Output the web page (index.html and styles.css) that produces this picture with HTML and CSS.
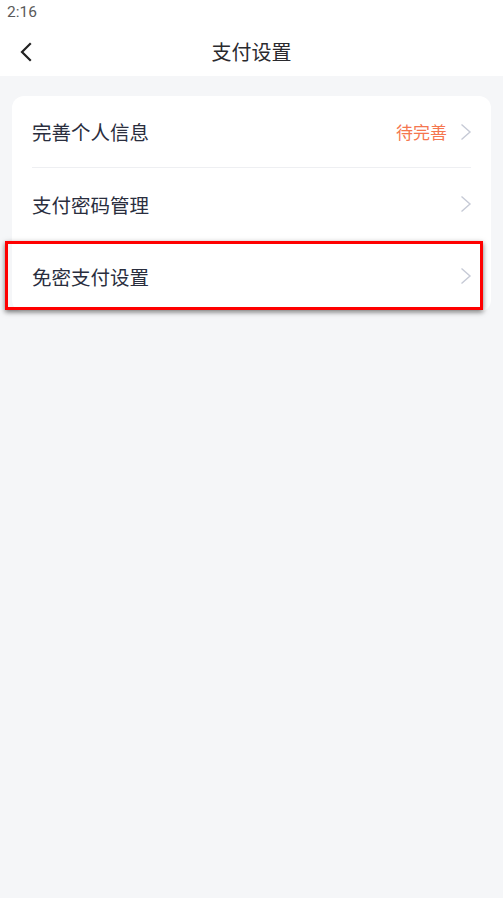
FILE: index.html
```
<!DOCTYPE html>
<html lang="zh">
<head>
<meta charset="utf-8">
<title>支付设置</title>
<link rel="stylesheet" href="styles.css">
</head>
<body>
<div class="page">
  <div class="status">2:16</div>
  <div class="nav">
    <svg class="back" width="14" height="20" viewBox="0 0 14 20"><path d="M11 2 L3 10 L11 18" fill="none" stroke="#222" stroke-width="2.2" stroke-linecap="square"/></svg>
    <div class="title">支付设置</div>
  </div>
  <div class="content">
    <div class="card">
      <div class="row">
        <span class="label">完善个人信息</span>
        <span class="right"><span class="status-tag">待完善</span><svg class="chev" width="12" height="18" viewBox="0 0 12 18"><path d="M1.5 1.5 L10 9 L1.5 16.5" fill="none" stroke="#c6cad6" stroke-width="1.4"/></svg></span>
      </div>
      <div class="row">
        <span class="label">支付密码管理</span>
        <span class="right"><svg class="chev" width="12" height="18" viewBox="0 0 12 18"><path d="M1.5 1.5 L10 9 L1.5 16.5" fill="none" stroke="#c6cad6" stroke-width="1.4"/></svg></span>
      </div>
      <div class="row">
        <span class="label">免密支付设置</span>
        <span class="right"><svg class="chev" width="12" height="18" viewBox="0 0 12 18"><path d="M1.5 1.5 L10 9 L1.5 16.5" fill="none" stroke="#c6cad6" stroke-width="1.4"/></svg></span>
      </div>
      <div class="highlight"></div>
    </div>
  </div>
</div>
</body>
</html>
```
FILE: styles.css
```
* { box-sizing: border-box; }
html, body { margin: 0; padding: 0; }
body {
  width: 503px;
  height: 898px;
  background: #f5f6f8;
  font-family: Roboto, "Noto Sans CJK SC", sans-serif;
  overflow: hidden;
}
.page { position: relative; }
.status {
  height: 28px;
  background: #fff;
  color: #5a5a5a;
  font-size: 15.5px;
  line-height: 24px;
  padding-left: 7px;
  font-family: Roboto, sans-serif;
}
.nav {
  position: relative;
  height: 48px;
  background: #fff;
  display: flex;
  align-items: center;
  justify-content: center;
}
.back {
  position: absolute;
  left: 19px;
  top: 14px;
}
.title {
  font-family: "Noto Sans CJK SC", sans-serif;
  font-size: 20px;
  color: #2a2a2e;
  line-height: 48px;
}
.content { padding: 20px 12px 0 12px; }
.card {
  position: relative;
  background: #fff;
  border-radius: 12px;
  padding: 0 20px;
}
.row {
  height: 72px;
  display: flex;
  align-items: center;
  justify-content: space-between;
  border-bottom: 1px solid #eeeff2;
}
.row:nth-child(2), .row:nth-child(3) { border-bottom: none; }
.label {
  font-family: "Noto Sans CJK SC", sans-serif;
  font-size: 19.5px;
  color: #2a2e3e;
}
.right { display: flex; align-items: center; }
.status-tag {
  font-family: "Noto Sans CJK SC", sans-serif;
  font-size: 17px;
  color: #f5774f;
  margin-right: 13px;
}
.chev { display: block; margin-right: -1px; }
.highlight {
  position: absolute;
  left: -7px;
  top: 145px;
  width: 478px;
  height: 69px;
  border: 3px solid #f00;
  box-shadow: 0 2px 5px rgba(0,0,0,0.55);
}
```
